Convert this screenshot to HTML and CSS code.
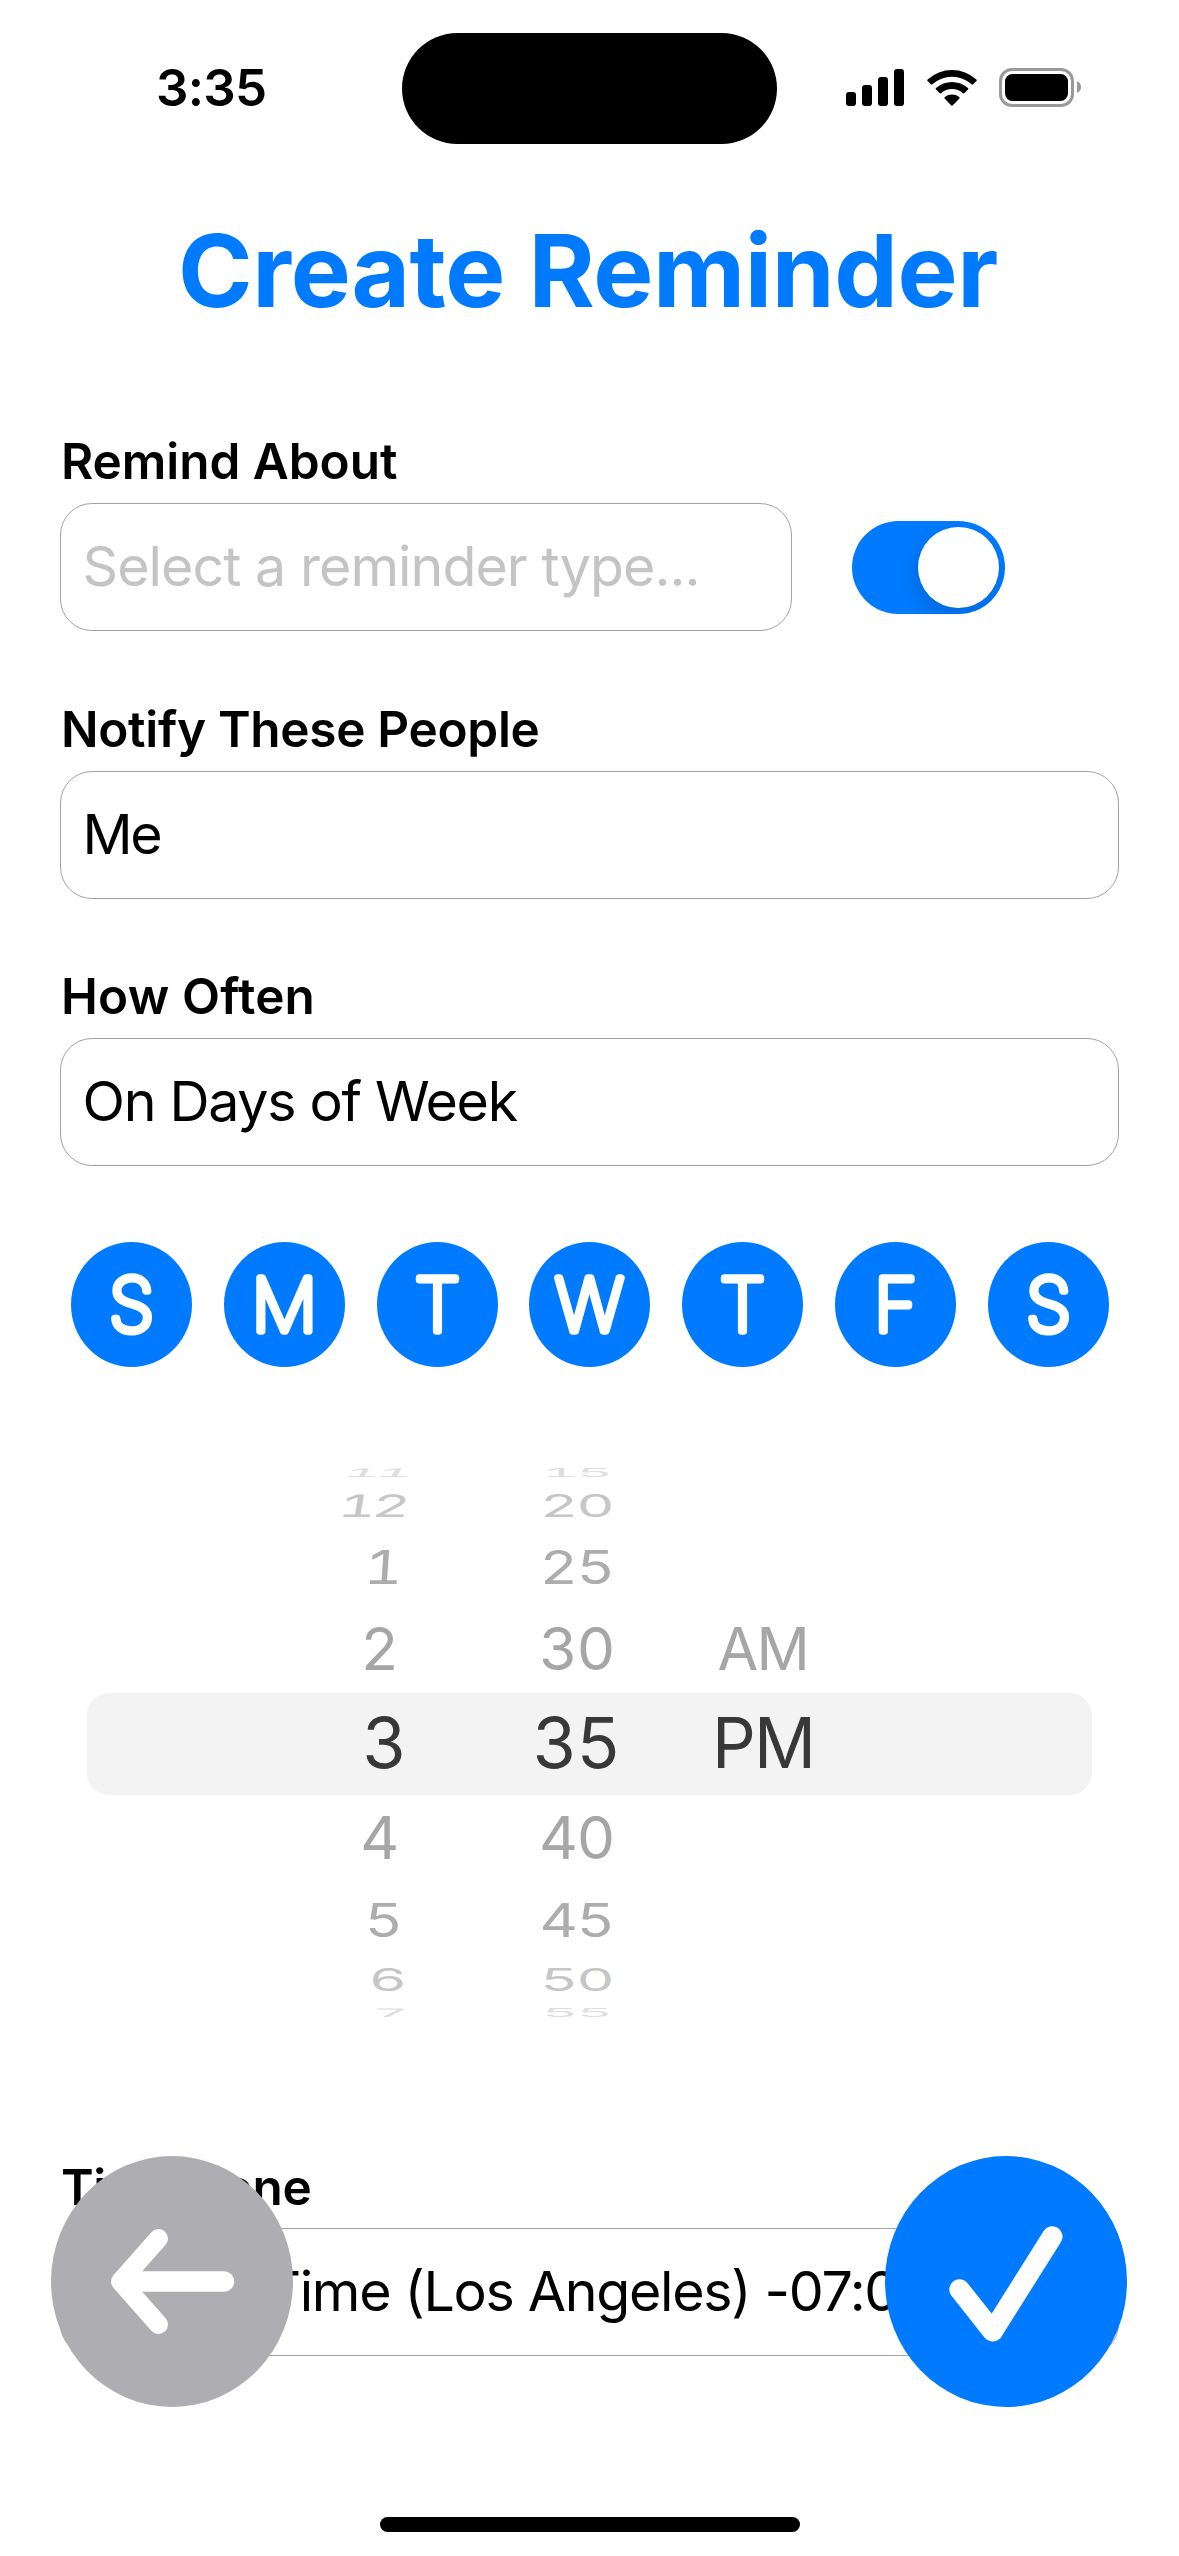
FILE: index.html
```html
<!DOCTYPE html>
<html lang="en">
<head>
<meta charset="utf-8">
<title>Create Reminder</title>
<link rel="stylesheet" href="styles.css">
</head>
<body>
<div class="screen">
  <header class="status">
    <div class="status-side"><span class="clock">3:35</span></div>
    <div class="island"></div>
    <div class="status-side status-icons">
      <svg class="signal" viewBox="0 0 58 37"><rect y="23" width="10" height="14" rx="3"/><rect x="16" y="16" width="10" height="21" rx="3"/><rect x="32" y="8" width="10" height="29" rx="3"/><rect x="48" width="10" height="37" rx="3"/></svg>
      <svg class="wifi" viewBox="0 0 50 37"><path d="M.6 10.4A36.500 36.500 0 0 1 49.400 10.400Q50.200 11.200 49.400 12L46.200 15.200Q45.400 15.900 44.600 15.200A29.500 29.500 0 0 0 5.400 15.200Q4.600 15.900 3.800 15.200L.6 12Q-.2 11.200 .6 10.400Z"/><path d="M9 19A24 24 0 0 1 41 19Q41.800 19.800 41 20.600L37.500 24.100Q36.700 24.900 35.900 24.200A16.500 16.500 0 0 0 14.100 24.200Q13.300 24.900 12.500 24.100L9 20.600Q8.200 19.800 9 19Z"/><path d="M17.800 28A12 12 0 0 1 32.200 28Q33 29 32.200 29.700L25.600 36.400Q25 37 24.400 36.400L17.800 29.700Q17 29 17.800 28Z"/></svg>
      <svg class="battery" viewBox="0 0 82 39"><rect x="1.500" y="1.500" width="72" height="36" rx="11.500" fill="none" stroke="#999" stroke-width="3"/><rect x="6" y="6" width="63" height="27" rx="7.500"/><path d="M78 13Q82 15 82 19T78 25Z" fill="#999"/></svg>
    </div>
  </header>

  <h1 class="title"><span>Create Reminder</span></h1>

  <main class="form">
    <section class="field">
      <h2 class="label remind">Remind About</h2>
      <div class="field-row">
        <div class="input input-short"><span class="placeholder">Select a reminder type...</span></div>
        <div class="switch"><div class="knob"></div></div>
      </div>
    </section>
    <section class="field">
      <h2 class="label notify">Notify These People</h2>
      <div class="input"><span class="me">Me</span></div>
    </section>
    <section class="field">
      <h2 class="label often">How Often</h2>
      <div class="input"><span class="freq">On Days of Week</span></div>
    </section>

    <div class="days">
      <svg class="day" viewBox="0 0 121 125"><text x="60.500" y="88.500">S</text></svg>
      <svg class="day" viewBox="0 0 121 125"><text x="60.500" y="88.500">M</text></svg>
      <svg class="day" viewBox="0 0 121 125"><text x="60.500" y="88.500">T</text></svg>
      <svg class="day" viewBox="0 0 121 125"><text x="60.500" y="88.500">W</text></svg>
      <svg class="day" viewBox="0 0 121 125"><text x="60.500" y="88.500">T</text></svg>
      <svg class="day" viewBox="0 0 121 125"><text x="60.500" y="88.500">F</text></svg>
      <svg class="day" viewBox="0 0 121 125"><text x="60.500" y="88.500">S</text></svg>
    </div>

    <div class="picker">
      <div class="row r1"><span class="hour">11</span><span class="minute">15</span><span class="half"></span></div>
      <div class="row r2"><span class="hour">12</span><span class="minute">20</span><span class="half"></span></div>
      <div class="row r3"><span class="hour">1</span><span class="minute">25</span><span class="half"></span></div>
      <div class="row r4"><span class="hour">2</span><span class="minute">30</span><span class="half">AM</span></div>
      <div class="row r5"><span class="hour">3</span><span class="minute">35</span><span class="half">PM</span></div>
      <div class="row r6"><span class="hour">4</span><span class="minute">40</span><span class="half"></span></div>
      <div class="row r7"><span class="hour">5</span><span class="minute">45</span><span class="half"></span></div>
      <div class="row r8"><span class="hour">6</span><span class="minute">50</span><span class="half"></span></div>
      <div class="row r9"><span class="hour">7</span><span class="minute">55</span><span class="half"></span></div>
    </div>

    <section class="field">
      <h2 class="label zone-label">Time Zone</h2>
      <div class="input"><span class="zone">Pacific Time (Los Angeles) -07:00</span></div>
    </section>
  </main>

  <nav class="actions">
    <svg class="fab back" viewBox="0 0 242 251"><g fill="none" stroke="#fff" stroke-linecap="round" stroke-linejoin="round"><path d="M107.500 82.500L69.500 125.500L107.500 168.500" stroke-width="19"/><path d="M72 125.500H173" stroke-width="20.500"/></g></svg>
    <svg class="fab done" viewBox="0 0 242 251"><path d="M74.500 133.500L107.700 175.300L167.300 80.500" fill="none" stroke="#fff" stroke-width="20.500" stroke-linecap="round" stroke-linejoin="round"/></svg>
  </nav>
  <div class="home-bar"></div>
</div>
</body>
</html>
```

FILE: styles.css
```css
* { box-sizing: border-box; }
body { margin: 0; background: #fff; color: #000; font-family: Inter, "Liberation Sans", sans-serif; }
svg { display: block; flex: none; }
.screen { position: relative; width: 1179px; height: 2556px; overflow: hidden; }
.screen span { white-space: nowrap; }

.status { display: flex; align-items: flex-start; height: 178px; padding-top: 33px; }
.status-side { width: 402px; height: 111px; display: flex; }
.clock { margin: 30px 0 0 156px; font-size: 51px; line-height: 50px; font-weight: 600; letter-spacing: -.7px; }
.island { width: 375px; height: 111px; border-radius: 56px; background: #000; }
.status-icons { padding: 35px 0 0 69px; }
.signal { width: 58px; height: 37px; margin-top: 1px; }
.wifi { width: 50px; height: 37px; margin: 1px 0 0 22.500px; }
.battery { width: 82px; height: 39px; margin-left: 22.500px; }

.title { margin: 32px 3px 0 0; height: 120px; line-height: 120px; text-align: center; font-size: 101px; font-weight: 700; letter-spacing: -.4px; color: #007aff; }

.form { display: flex; flex-direction: column; padding: 107px 60px 0 60px; }
.field { margin-bottom: 73.500px; }
.label { margin: -1px 0 17px 1px; height: 50px; line-height: 50px; font-size: 49.500px; font-weight: 600; white-space: nowrap; }
.remind { letter-spacing: -.05px; }
.notify { letter-spacing: -.3px; }
.often { letter-spacing: .2px; }
.zone-label { margin: 0 0 16px 1px; letter-spacing: -.4px; }
.input { display: flex; align-items: center; height: 128px; padding: 0 0 2px 21.500px; border: 1px solid #a3a3a5; border-radius: 32px; font-size: 55.500px; line-height: 66px; letter-spacing: -1.300px; }
.placeholder { color: #c4c4c6; letter-spacing: -.950px; }
.me { letter-spacing: -2.500px; }
.zone { letter-spacing: -1.300px; }
.field-row { display: flex; align-items: center; gap: 60px; }
.input-short { width: 732px; }
.switch { display: flex; justify-content: flex-end; align-items: center; width: 153px; height: 93px; padding-right: 6px; border-radius: 47px; background: #007aff; overflow: hidden; }
.knob { width: 81px; height: 81px; border-radius: 50%; background: #fff; box-shadow: -3px 8px 18px rgba(0, 0, 0, .14); }

.days { display: flex; justify-content: space-between; margin-top: 2.750px; padding: 0 10px 0 11px; }
.day { width: 121px; height: 125px; border-radius: 50%; background: #007aff; }
.day text { font-size: 73px; font-weight: 100; text-anchor: middle; fill: #fff; stroke: #fff; stroke-width: 7.500px; stroke-linejoin: round; }

.picker { position: relative; z-index: 0; display: grid; grid-template-rows: 26px 40px 82px 81px 107px 83px 81px 40px 26px; margin: 93px 0 136px; font-size: 70px; color: #a6a6a6; font-variant-numeric: tabular-nums; }
.picker::before { content: ""; position: absolute; z-index: -1; left: 27px; right: 27px; top: 233px; height: 102px; border-radius: 22px; background: #f3f3f3; }
.row { display: grid; grid-template-columns: 120px 274px 100px; justify-content: start; align-items: center; padding-left: 264px; line-height: 0; }
.row span { display: block; justify-self: center; transform: scale(var(--sx), var(--sy)); }
.row .hour { transform: translateX(var(--dx)) scale(var(--sx), var(--sy)) skewX(var(--skew, 0deg)); }
.row .minute { margin-right: 10px; letter-spacing: -2px; }
.row .half { margin-right: 10px; letter-spacing: -2px; transform: scale(calc(var(--sx) * .98), var(--sy)); }
.r1 { --sx: .8; --sy: .165; --dx: -8px; --skew: -7deg; color: #dedede; }
.r2 { --sx: .84; --sy: .44; --dx: -12px; --skew: -5deg; color: #c6c6c6; }
.r1 .hour, .r2 .hour { letter-spacing: -5px; }
.r3 { --sx: .85; --sy: .67; --dx: 0px; --skew: -3deg; color: #adadad; }
.r4 { --sx: .86; --sy: .84; --dx: -4px; }
.r5 { --sx: 1; --sy: 1; --dx: 1px; color: #383838; }
.r6 { --sx: .86; --sy: .84; --dx: -4px; }
.r7 { --sx: .85; --sy: .67; --dx: 0px; color: #adadad; }
.r8 { --sx: .84; --sy: .44; --dx: 4px; color: #c6c6c6; }
.r9 { --sx: .8; --sy: .165; --dx: 8px; --skew: 5deg; color: #dedede; }

.actions { position: absolute; left: 51px; right: 52px; top: 2156px; display: flex; justify-content: space-between; }
.fab { width: 242px; height: 251px; border-radius: 50%; }
.back { background: #aeaeb2; }
.done { background: #007aff; }
.home-bar { position: absolute; left: 380px; top: 2517px; width: 420px; height: 15px; border-radius: 8px; background: #000; }
```
